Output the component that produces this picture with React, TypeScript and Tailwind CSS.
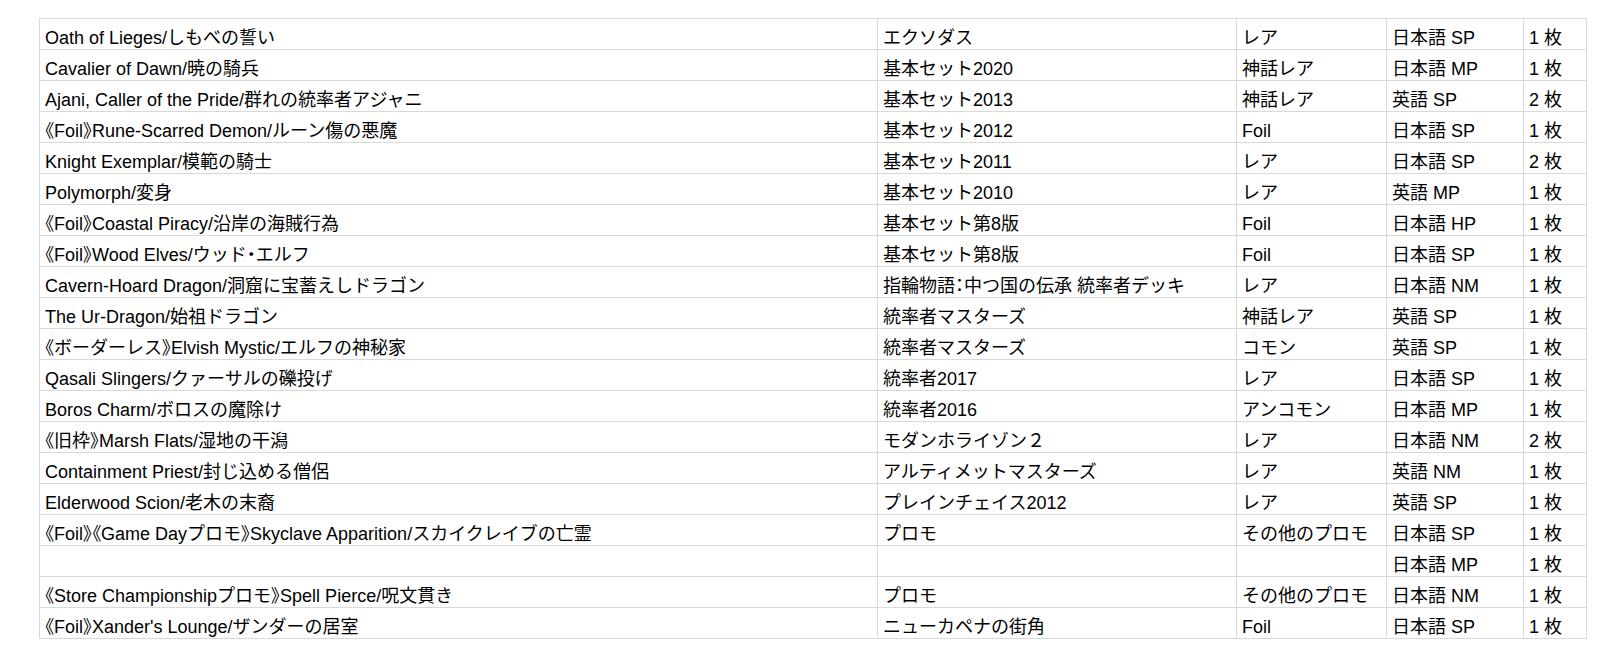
import { Fragment } from "react";

const rows: Array<[string, string, string, string, string]> = [
  ["Oath of Lieges/しもべの誓い", "エクソダス", "レア", "日本語 SP", "1 枚"],
  ["Cavalier of Dawn/暁の騎兵", "基本セット2020", "神話レア", "日本語 MP", "1 枚"],
  ["Ajani, Caller of the Pride/群れの統率者アジャニ", "基本セット2013", "神話レア", "英語 SP", "2 枚"],
  ["《Foil》Rune-Scarred Demon/ルーン傷の悪魔", "基本セット2012", "Foil", "日本語 SP", "1 枚"],
  ["Knight Exemplar/模範の騎士", "基本セット2011", "レア", "日本語 SP", "2 枚"],
  ["Polymorph/変身", "基本セット2010", "レア", "英語 MP", "1 枚"],
  ["《Foil》Coastal Piracy/沿岸の海賊行為", "基本セット第8版", "Foil", "日本語 HP", "1 枚"],
  ["《Foil》Wood Elves/ウッド・エルフ", "基本セット第8版", "Foil", "日本語 SP", "1 枚"],
  ["Cavern-Hoard Dragon/洞窟に宝蓄えしドラゴン", "指輪物語：中つ国の伝承 統率者デッキ", "レア", "日本語 NM", "1 枚"],
  ["The Ur-Dragon/始祖ドラゴン", "統率者マスターズ", "神話レア", "英語 SP", "1 枚"],
  ["《ボーダーレス》Elvish Mystic/エルフの神秘家", "統率者マスターズ", "コモン", "英語 SP", "1 枚"],
  ["Qasali Slingers/クァーサルの礫投げ", "統率者2017", "レア", "日本語 SP", "1 枚"],
  ["Boros Charm/ボロスの魔除け", "統率者2016", "アンコモン", "日本語 MP", "1 枚"],
  ["《旧枠》Marsh Flats/湿地の干潟", "モダンホライゾン２", "レア", "日本語 NM", "2 枚"],
  ["Containment Priest/封じ込める僧侶", "アルティメットマスターズ", "レア", "英語 NM", "1 枚"],
  ["Elderwood Scion/老木の末裔", "プレインチェイス2012", "レア", "英語 SP", "1 枚"],
  ["《Foil》《Game Dayプロモ》Skyclave Apparition/スカイクレイブの亡霊", "プロモ", "その他のプロモ", "日本語 SP", "1 枚"],
  ["", "", "", "日本語 MP", "1 枚"],
  ["《Store Championshipプロモ》Spell Pierce/呪文貫き", "プロモ", "その他のプロモ", "日本語 NM", "1 枚"],
  ["《Foil》Xander's Lounge/ザンダーの居室", "ニューカペナの街角", "Foil", "日本語 SP", "1 枚"],
];

// brackets, dot and colon are set tight like a proportional gothic
const Cell = ({ text }: { text: string }) => (
  <>
    {text.split(/([《》・：])/).map((part, i) =>
      /^[《》・：]$/.test(part) ? (
        <span key={i} className="[font-feature-settings:'palt']">
          {part}
        </span>
      ) : (
        <Fragment key={i}>{part}</Fragment>
      )
    )}
  </>
);

export default function App() {
  return (
    <div
      className="min-h-[657px] bg-white pt-[18px] pl-[39px] text-black"
      style={{ fontFamily: '"Liberation Sans", Arial, "Noto Sans CJK JP", sans-serif' }}
    >
      <table className="table-fixed border-collapse w-[1547px] text-[18px] leading-[20px]">
        <colgroup>
          <col className="w-[838px]" />
          <col className="w-[359px]" />
          <col className="w-[150px]" />
          <col className="w-[137px]" />
          <col className="w-[63px]" />
        </colgroup>
        <tbody>
          {rows.map((row, i) => (
            <tr key={i}>
              {row.map((cell, j) => (
                <td
                  key={j}
                  className="border border-[#d9d9d9] pl-[5px] pr-1 pt-[9px] pb-[1px] align-top whitespace-nowrap overflow-hidden h-[30px]"
                >
                  <Cell text={cell} />
                </td>
              ))}
            </tr>
          ))}
        </tbody>
      </table>
    </div>
  );
}
